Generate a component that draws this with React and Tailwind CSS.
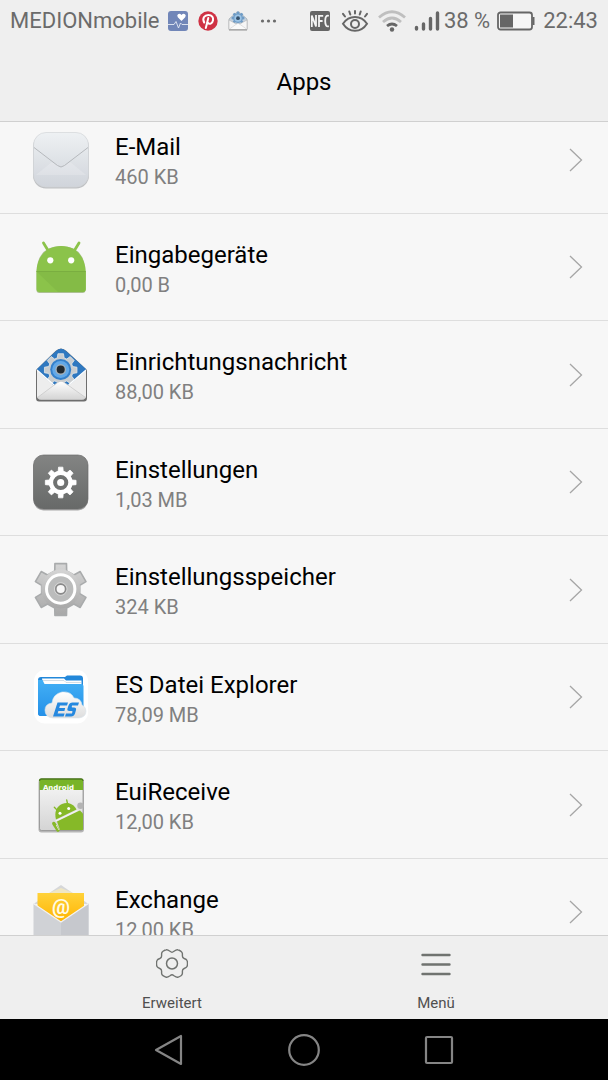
import React from "react";

function gearPath(cx, cy, teeth, outer, inner, topHalf, baseHalf) {
  const pts = [];
  for (let i = 0; i < teeth; i++) {
    const a = (i * 2 * Math.PI) / teeth - Math.PI / 2;
    [
      [inner, -baseHalf],
      [outer, -topHalf],
      [outer, topHalf],
      [inner, baseHalf],
    ].forEach(([r, d]) => {
      pts.push(`${(cx + r * Math.cos(a + d)).toFixed(2)} ${(cy + r * Math.sin(a + d)).toFixed(2)}`);
    });
  }
  return `M${pts.join("L")}Z`;
}

function Gradient({ id, from, to }) {
  return (
    <linearGradient id={id} x1="0" y1="0" x2="0" y2="1">
      <stop offset="0" stopColor={from} />
      <stop offset="1" stopColor={to} />
    </linearGradient>
  );
}

function MailIcon() {
  return (
    <>
      <Gradient id="mail" from="#eef1f3" to="#d0d4db" />
      <rect x="2" y="3.5" width="56" height="55" rx="13" fill="#b0b3b7" opacity=".8" />
      <rect x="2.5" y="2.5" width="55" height="54.500" rx="12.500" fill="url(#mail)" stroke="#d2d5d9" strokeWidth=".7" />
      <path d="M5 45 21 32l6 4q3 2 6 0l6-4 16 13" fill="#fff" opacity=".18" />
      <path d="M3 17.500 26.500 35.500q3.500 3 7 0L57 17.500" fill="none" stroke="#b6b9bd" strokeWidth="1" />
    </>
  );
}

function AndroidIcon() {
  return (
    <>
      <path d="M5.500 35q1-26 24.500-26t24.500 26v18q0 3-3 3h-43q-3 0-3-3z" fill="#7c9b50" opacity=".6" />
      <path d="M12.500 6l5.500 9M48 6l-5.500 9" stroke="#8bc34a" strokeWidth="2.800" strokeLinecap="round" />
      <path d="M5.500 34.500C6 19 16 9 30.200 9S54 19 54.700 34.500V52q0 3-3 3H8.500q-3 0-3-3z" fill="#8bc34a" />
      <path d="M5.500 34.500h49.200V52q0 3-3 3H27z" fill="#84bb46" />
      <path d="M5.500 34.500h49.200" stroke="#7aae40" />
      <circle cx="19.300" cy="23.300" r="3.100" fill="#fff" />
      <circle cx="40.200" cy="23.300" r="3.100" fill="#fff" />
    </>
  );
}

function SetupMessageIcon() {
  return (
    <>
      <Gradient id="setup" from="#ffffff" to="#d4d4d4" />
      <path d="M5 25 24.500 6q5.500-5 11 0L56 25v28q0 3.500-3 3.500H8q-3 0-3-3.500z" fill="#6e6e6e" />
      <path d="M6 24 25 6q5-4.500 10 0l20 18v16H6z" fill="#2f78c0" />
      <path d={gearPath(29.7, 25, 8, 16.5, 12.5, 0.17, 0.28)} fill="#c9cdd0" stroke="#e4e8ea" strokeWidth=".8" strokeLinejoin="round" />
      <circle cx="29.700" cy="24.500" r="10.500" fill="#3580cb" />
      <circle cx="29.700" cy="24.500" r="8.500" fill="#62a8e8" />
      <circle cx="29.700" cy="24.500" r="5.400" fill="#a4b0b9" />
      <circle cx="29.700" cy="24.500" r="4" fill="#222a31" />
      <path d="M6 25 23 41h14l18-16v26q0 3-3 3H9q-3 0-3-3z" fill="#ededed" />
      <path d="M6.500 52.500 26 38q4-3.500 8 0l20.500 14.500q-1 2-3 2H9.500q-2 0-3-2z" fill="url(#setup)" stroke="#c9c9c9" strokeWidth=".8" />
      <path d="M6 25 23 40M55 25 37.500 40" stroke="#fff" strokeWidth="1.200" />
    </>
  );
}

function SettingsIcon() {
  return (
    <>
      <Gradient id="settings" from="#838483" to="#676968" />
      <rect x="2.500" y="4" width="54.500" height="54.500" rx="10" fill="#aaa" />
      <rect x="2.500" y="3" width="54.500" height="54" rx="10" fill="url(#settings)" stroke="#6c6c6c" strokeWidth=".7" />
      <path d={gearPath(29.7, 30.5, 8, 15.5, 11.5, 0.14, 0.22)} fill="#fff" stroke="#fff" strokeWidth=".8" strokeLinejoin="round" />
      <circle cx="29.700" cy="30.500" r="11.600" fill="#fff" />
      <circle cx="29.700" cy="30.500" r="5.600" fill="none" stroke="#707271" strokeWidth="4" />
    </>
  );
}

function StorageIcon() {
  return (
    <>
      <Gradient id="storage" from="#d5d5d5" to="#a8a8a8" />
      <path d={gearPath(29.7, 29.5, 6, 26.5, 19.5, 0.22, 0.31)} fill="url(#storage)" stroke="#a9abac" strokeWidth="1.600" strokeLinejoin="round" />
      <circle cx="29.700" cy="29" r="19.500" fill="url(#storage)" />
      <circle cx="29.700" cy="29" r="14.200" fill="#bbbcbc" stroke="#fff" strokeWidth="3" />
      <circle cx="29.700" cy="29" r="6.300" fill="none" stroke="#ddd" strokeWidth=".8" />
      <circle cx="29.700" cy="29" r="4.900" fill="#f7f7f7" stroke="#898989" strokeWidth="1.600" />
    </>
  );
}

function ExplorerIcon() {
  return (
    <>
      <Gradient id="folder" from="#43b0f5" to="#2490e8" />
      <Gradient id="cloud" from="#ffffff" to="#dddddd" />
      <rect x="3" y="3" width="54" height="53.500" rx="11" fill="#fff" />
      <path d="M7 13q0-3 3-3h24l2-1.500h13q3 0 3 3V49H10q-3 0-3-3z" fill="#2388da" />
      <path d="M11 11.500h22l2 2h15.500v8H13z" fill="#fff" />
      <path d="M12 13.500h21l2 2h15" fill="none" stroke="#c9d6df" strokeWidth=".8" />
      <path d="M7 13h4.500l2 4H50q2.500 0 2.500 2v30H10q-3 0-3-3z" fill="url(#folder)" />
      <path d="M22 51q-8-.5-8-8 0-6 7-7 1-9 10-11 9-1 12 6 7 0 8 7 4 2 4 6 0 6-7 7z" fill="url(#cloud)" stroke="#d8e4ed" strokeWidth=".6" />
      <path d="M26.500 35.500H37l-1 3h-7l-.8 2.500h6l-.8 3h-6l-.8 2.500h7l-1 3H22z" fill="#2588df" />
      <path d="M48 35.500h-6.500q-3 0-4 3l-1 3q-.8 2.500 2 2.500h2.300q1 0 .6 1l-.5 1.500H35l-1 3h6q3 0 4-3l1-3.500q.7-2.500-2-2.500h-1.500q-1 0-.7-1l.3-1H47z" fill="#2588df" />
    </>
  );
}

function EuiIcon() {
  return (
    <>
      <Gradient id="eui" from="#f8f8f8" to="#d4d4d4" />
      <rect x="7.500" y="4.500" width="45.500" height="53" rx="3" fill="#555" opacity=".4" />
      <rect x="8.500" y="4" width="43.500" height="51.500" rx="2" fill="url(#eui)" stroke="#8a8a8a" strokeWidth=".7" />
      <path d="M8.500 6q0-2 2-2H50q2 0 2 2v9H8.500z" fill="#78b428" />
      <path d="M8.500 6q0-2 2-2H50q2 0 2 2" fill="none" stroke="#4c7a1c" strokeWidth="1.300" />
      <text x="27.500" y="15" textAnchor="middle" fontFamily="DejaVu Sans, sans-serif" fontWeight="700" fontSize="7" fill="#fff">Android</text>
      <circle cx="49.500" cy="30.700" r="3.200" fill="#b4b4b4" />
      <path d="M25 44.500C23 37 25.500 31.500 31 29s11.500-.5 14.500 5.500z" fill="#86b928" />
      <path d="M26 46.500 46.500 36.500l2.500-1 3 3V55H29z" fill="#86b928" />
      <path d="M22.800 48.500 27 55" stroke="#86b928" strokeWidth="3.400" strokeLinecap="round" />
      <path d="M25.200 50 28 55" stroke="#e4e8d8" strokeWidth=".9" />
      <path d="m26.500 35.500-3.200-3.200M36.700 29.500l-1-4.500" stroke="#86b928" strokeWidth="1.300" strokeLinecap="round" />
      <path d="m24.500 46 22-10.500" stroke="#f4f4f4" strokeWidth="1.300" />
      <circle cx="29" cy="38.300" r="1.500" fill="#fff" />
      <circle cx="37.700" cy="33.500" r="1.500" fill="#fff" />
    </>
  );
}

function ExchangeIcon() {
  return (
    <>
      <Gradient id="exchange" from="#ffd23a" to="#ffb300" />
      <path d="M2.500 22 30 3l27.500 19z" fill="#d6d7d9" />
      <path d="M6.500 11H53v30H6.500z" fill="url(#exchange)" />
      <path d="M18 11 30 6l12 5z" fill="#efe6c4" />
      <text x="30" y="32" textAnchor="middle" fontFamily="Roboto, sans-serif" fontWeight="700" fontSize="20" fill="#fffbe6">@</text>
      <path d="M2.500 21.500 30 40l27.500-18.500V58h-55z" fill="#d0d2d6" />
      <path d="M30 40l27.500-18.500V58H30z" fill="#c6c8cd" />
      <path d="M2.500 21.500 30 40l27.500-18.500" fill="none" stroke="#f2f2f3" strokeWidth="1.200" />
    </>
  );
}

const apps = [
  { name: "E-Mail", size: "460 KB", Icon: MailIcon },
  { name: "Eingabegeräte", size: "0,00 B", Icon: AndroidIcon },
  { name: "Einrichtungsnachricht", size: "88,00 KB", Icon: SetupMessageIcon },
  { name: "Einstellungen", size: "1,03 MB", Icon: SettingsIcon },
  { name: "Einstellungsspeicher", size: "324 KB", Icon: StorageIcon },
  { name: "ES Datei Explorer", size: "78,09 MB", Icon: ExplorerIcon },
  { name: "EuiReceive", size: "12,00 KB", Icon: EuiIcon },
  { name: "Exchange", size: "12,00 KB", Icon: ExchangeIcon },
];

function AppRow({ name, size, Icon }) {
  return (
    <li className="border-b border-[#dedede] odd:h-[108px] even:h-[107px]">
      <button type="button" className="flex h-full w-full items-center pr-6 pl-[31px] text-left">
        <svg viewBox="0 0 60 60" className="mr-6 size-[60px] shrink-0" aria-hidden="true">
          <Icon />
        </svg>
        <span className="flex min-w-0 flex-1 flex-col pt-[5px]">
          <span className="truncate text-[24px] leading-[30px] text-black">{name}</span>
          <span className="truncate text-[20px] leading-[30px] text-[#808080]">{size}</span>
        </span>
        <svg viewBox="0 0 16 24" className="h-6 w-4 shrink-0" fill="none" stroke="#a6a6a6" strokeWidth="1.300" aria-hidden="true">
          <path d="M2 1 13.500 12 2 23" />
        </svg>
      </button>
    </li>
  );
}

function StatusBar() {
  return (
    <div className="flex h-[42px] shrink-0 items-center justify-between px-[10px] text-[22px] leading-6 text-[#6b6b6b]">
      <div className="flex items-center gap-2">
        <span>MEDIONmobile</span>
        <div className="flex items-center gap-[10px]">
          <svg viewBox="0 0 20 20" className="size-5" aria-hidden="true">
            <rect width="20" height="20" rx="3" fill="#7186b8" />
            <path d="M13.500 10 9.800 6.200q-1.200-1.800.2-3 1.800-1.200 3.500.8 1.700-2 3.500-.8 1.400 1.200.2 3z" fill="#fff" />
            <path d="M0 13.500h6l2-3 2.500 6.500 2-5 1.500 1.500h6" fill="none" stroke="#e5eaf4" strokeWidth=".9" />
          </svg>
          <svg viewBox="0 0 20 20" className="size-5" aria-hidden="true">
            <circle cx="10" cy="10" r="9.700" fill="#cf3244" />
            <path d="M6.200 11.500C3.800 7 6.800 4 10.300 4c3.800 0 5.200 2.500 4.700 5.200-.6 3.500-3.800 4.600-5 2.500M10.300 7 7.800 17" fill="none" stroke="#fff" strokeWidth="2" strokeLinecap="round" />
          </svg>
          <svg viewBox="0 0 20 20" className="size-5" aria-hidden="true">
            <path d="m1 8 7.500-6.500q1.500-1 3 0L19 8v10.500H1z" fill="#c4d2df" stroke="#a0a6ab" strokeWidth=".7" />
            <path d={gearPath(10, 7, 8, 6.5, 4.8, 0.18, 0.3)} fill="#6f9cc6" />
            <circle cx="10" cy="7.200" r="3.600" fill="#9cc4e6" />
            <circle cx="10" cy="7.200" r="1.900" fill="#35516c" />
            <path d="m1 9 9 5 9-5v9.500H1z" fill="#f6f6f6" stroke="#b5b5b5" strokeWidth=".6" />
            <path d="m1.500 18 8.500-6 8.500 6" fill="#fafafa" stroke="#ccc" strokeWidth=".6" />
            <path d="M1 19h18" stroke="#929292" />
          </svg>
          <svg viewBox="0 0 20 20" className="size-5" fill="#6b6b6b" aria-hidden="true">
            <circle cx="4.500" cy="10" r="1.600" />
            <circle cx="10.500" cy="10" r="1.600" />
            <circle cx="16.500" cy="10" r="1.600" />
          </svg>
        </div>
      </div>
      <div className="flex items-center">
        <svg viewBox="0 0 20 20" className="mr-[11px] size-5" aria-hidden="true">
          <rect width="20" height="20" rx="2" fill="#666" />
          <path d="M1.800 16V4.500l4.200 11V4M9 16V4.800h4.200M9 10h3.600M18.800 4.800q-3.600-1-3.600 5.200t3.600 5.200" fill="none" stroke="#f4f4f4" strokeWidth="1.800" />
        </svg>
        <svg viewBox="0 0 28 24" className="mr-[9px] h-6 w-7" fill="none" stroke="#666" strokeWidth="2" strokeLinecap="round" aria-hidden="true">
          <path d="M2 14.800Q6.500 8 14 8t12 6.800Q21.500 21.800 14 21.800T2 14.800z" />
          <circle cx="14" cy="15" r="4" />
          <path d="M4 7.500 2 4.800M9.300 5.500 8.300 2.500M14 4.500V2M18.700 5.500l1-3M24 7.500l2-2.700" />
        </svg>
        <svg viewBox="0 0 28 22" className="mr-2 h-[22px] w-7" fill="none" strokeWidth="2.800" aria-hidden="true">
          <path d="M1 7.500Q14-4 27 7.500M5 12Q14 4 23 12" stroke="#bfbfbf" />
          <path d="M9 16q5-4 10 0" stroke="#666" />
          <circle cx="14" cy="19.500" r="2.200" fill="#666" />
        </svg>
        <svg viewBox="0 0 26 22" className="mr-1 h-[22px] w-[26px]" stroke="#666" strokeWidth="3.400" strokeLinecap="round" aria-hidden="true">
          <path d="M2.500 19v-1.500M9.500 19v-5M16.500 19V8.500M23.500 19V3" />
        </svg>
        <span>38 %</span>
        <svg viewBox="0 0 38 20" className="mr-2 ml-[7px] h-5 w-[38px]" aria-hidden="true">
          <rect x="1" y="1.500" width="34" height="17" rx="2.500" fill="#f6f6f6" stroke="#666" strokeWidth="1.800" />
          <rect x="3" y="3.500" width="13" height="13" fill="#666" />
          <path d="M36.500 6v8" stroke="#666" strokeWidth="2" />
        </svg>
        <span>22:43</span>
      </div>
    </div>
  );
}

function ToolButton({ label, children }) {
  return (
    <button type="button" className="flex flex-col items-center gap-[13px] pt-3 text-[15px] leading-5 text-[#4f4f4f]">
      <svg viewBox="0 0 32 32" className="size-8" fill="none" stroke="#707370" aria-hidden="true">
        {children}
      </svg>
      {label}
    </button>
  );
}

export default function App() {
  return (
    <div className="flex h-screen flex-col overflow-hidden bg-[#f7f7f7] font-['Roboto',sans-serif]">
      <header className="shrink-0 border-b border-[#d0d0d0] bg-[#efefef]">
        <StatusBar />
        <h1 className="h-[79px] text-center text-[24px] leading-[80px] text-black">Apps</h1>
      </header>
      <main className="min-h-0 flex-1 overflow-hidden">
        <ul className="-mt-4">
          {apps.map((app) => (
            <AppRow key={app.name} {...app} />
          ))}
        </ul>
      </main>
      <footer className="grid h-[84px] shrink-0 grid-cols-2 border-t border-[#d0d0d0] bg-[#efefef] px-10">
        <ToolButton label="Erweitert">
          <path
            d="M16 4.300q.7 0 2-1 2.500-1.800 3.800-1.500 1.300.2 3.200 1.500 1.400 1 1.400 2.500V8q0 1.800 1.800 2.500 2.300.8 2.800 2 .5 1 .5 3t-.5 3q-.5 1.200-2.800 2-1.800.7-1.800 2.500v2.200q0 1.500-1.400 2.500-1.900 1.300-3.200 1.500-1.300.3-3.800-1.500-1.300-1-2-1t-2 1q-2.500 1.800-3.800 1.500-1.300-.2-3.200-1.500-1.400-1-1.400-2.500V23q0-1.800-1.800-2.500-2.300-.8-2.800-2-.5-1-.5-3t.5-3q.5-1.200 2.800-2Q5.600 9.800 5.600 8V5.800q0-1.500 1.400-2.500 1.900-1.300 3.200-1.500 1.300-.3 3.800 1.500 1.300 1 2 1z"
            strokeWidth="1.400"
          />
          <circle cx="16" cy="15.500" r="5.500" strokeWidth="1.500" />
        </ToolButton>
        <ToolButton label="Menü">
          <path d="M2.500 7h27M2.500 16.500h27M2.500 26h27" strokeWidth="2.400" strokeLinecap="round" />
        </ToolButton>
      </footer>
      <nav aria-label="System" className="grid h-[61px] shrink-0 grid-cols-3 bg-black px-[101px]">
        <button type="button" aria-label="Back" className="flex items-center justify-center">
          <svg viewBox="0 0 32 32" className="size-8" fill="none" stroke="#858585" strokeWidth="2.200" strokeLinejoin="round">
            <path d="M28 2v28L3 16z" />
          </svg>
        </button>
        <button type="button" aria-label="Home" className="flex items-center justify-center">
          <svg viewBox="0 0 32 32" className="size-8" fill="none" stroke="#858585" strokeWidth="2.200">
            <circle cx="16" cy="16" r="14.800" />
          </svg>
        </button>
        <button type="button" aria-label="Recent apps" className="flex items-center justify-center">
          <svg viewBox="0 0 32 32" className="size-8" fill="none" stroke="#858585" strokeWidth="2.200">
            <rect x="3" y="3" width="26" height="26" rx="1" />
          </svg>
        </button>
      </nav>
    </div>
  );
}
